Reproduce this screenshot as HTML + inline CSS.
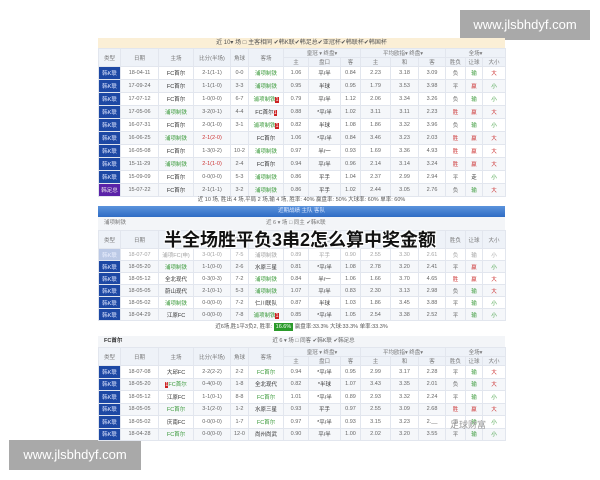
<!DOCTYPE html>
<html><head><meta charset="utf-8"><style>
*{margin:0;padding:0;box-sizing:border-box}
body{width:600px;height:480px;background:#fff;position:relative;overflow:hidden;font-family:"Liberation Sans","Noto Sans CJK SC",sans-serif;color:#666}
.abs{position:absolute}
table{border-collapse:collapse;table-layout:fixed;width:407px;font-size:5.5px;text-align:center}
td{border:1px solid #e2e6ee;white-space:nowrap;overflow:hidden;padding:0}
tr.a td{background:#fff}
tr.b td{background:#f5f7fa}
.h td{background:#eef2f8;color:#777}
td.t{background:#1d48a4 !important;color:#dfe6ff}
td.p{background:#5a22a8 !important;color:#eee}
.g{color:#3a9a3a}.r{color:#c33}.k{color:#333}
.wm{background:#a9a9a9;color:#fff;font-size:13px;text-align:center;line-height:30px}
</style></head><body>
<div class="abs wm" style="left:460px;top:10px;width:130px;height:30px">www.jlsbhdyf.com</div>
<div class="abs wm" style="left:9px;top:440px;width:132px;height:30px">www.jlsbhdyf.com</div>

<div class="abs" style="left:98px;top:38px;width:407px;height:10px;background:#fbefd6;font-size:6px;line-height:10px;text-align:center;color:#555">近 10▾ 场 □ 主客相同 ✔韩K联✔韩足总✔亚冠杯✔韩联杯✔韩国杯</div>
<table class="abs" style="left:98px;top:48px">
<colgroup><col style="width:22px"><col style="width:38px"><col style="width:35px"><col style="width:37px"><col style="width:18px"><col style="width:35px"><col style="width:25px"><col style="width:32px"><col style="width:20px"><col style="width:30px"><col style="width:28px"><col style="width:27px"><col style="width:20px"><col style="width:17px"><col style="width:23px"></colgroup>
<tr class="h" style="height:9px"><td rowspan="2">类型</td><td rowspan="2">日期</td><td rowspan="2">主场</td><td rowspan="2">比分(半场)</td><td rowspan="2">角球</td><td rowspan="2">客场</td><td colspan="3">皇冠 ▾ 终盘▾</td><td colspan="3">平均欧指▾ 终盘▾</td><td colspan="3">全场▾</td></tr>
<tr class="h" style="height:9px"><td>主</td><td>盘口</td><td>客</td><td>主</td><td>和</td><td>客</td><td>胜负</td><td>让球</td><td>大小</td></tr>
<tr class="a" style="height:13px"><td class="t">韩K联</td><td>18-04-11</td><td class="k">FC首尔</td><td>2-1(1-1)</td><td>0-0</td><td class="g">浦项制铁</td><td>1.06</td><td class="k">平/半</td><td>0.84</td><td>2.23</td><td>3.18</td><td>3.09</td><td>负</td><td class="g">输</td><td class="r">大</td></tr>
<tr class="b" style="height:13px"><td class="t">韩K联</td><td>17-09-24</td><td class="k">FC首尔</td><td>1-1(1-0)</td><td>3-3</td><td class="g">浦项制铁</td><td>0.95</td><td class="k">半球</td><td>0.95</td><td>1.79</td><td>3.53</td><td>3.98</td><td>平</td><td class="r">赢</td><td class="g">小</td></tr>
<tr class="a" style="height:13px"><td class="t">韩K联</td><td>17-07-12</td><td class="k">FC首尔</td><td>1-0(0-0)</td><td>6-7</td><td class="g">浦项制铁<span style="background:#c22;color:#fff">1</span></td><td>0.79</td><td class="k">平/半</td><td>1.12</td><td>2.06</td><td>3.34</td><td>3.26</td><td>负</td><td class="g">输</td><td class="g">小</td></tr>
<tr class="b" style="height:13px"><td class="t">韩K联</td><td>17-05-06</td><td class="g">浦项制铁</td><td>3-2(0-1)</td><td>4-4</td><td class="k">FC首尔<span style="background:#c22;color:#fff">1</span></td><td>0.88</td><td class="k">*平/半</td><td>1.02</td><td>3.11</td><td>3.11</td><td>2.23</td><td class="r">胜</td><td class="r">赢</td><td class="r">大</td></tr>
<tr class="a" style="height:13px"><td class="t">韩K联</td><td>16-07-31</td><td class="k">FC首尔</td><td>2-0(1-0)</td><td>3-1</td><td class="g">浦项制铁<span style="background:#c22;color:#fff">1</span></td><td>0.82</td><td class="k">半球</td><td>1.08</td><td>1.86</td><td>3.32</td><td>3.96</td><td>负</td><td class="g">输</td><td class="g">小</td></tr>
<tr class="b" style="height:13px"><td class="t">韩K联</td><td>16-06-25</td><td class="g">浦项制铁</td><td class="r">2-1(2-0)</td><td></td><td class="k">FC首尔</td><td>1.06</td><td class="k">*平/半</td><td>0.84</td><td>3.46</td><td>3.23</td><td>2.03</td><td class="r">胜</td><td class="r">赢</td><td class="r">大</td></tr>
<tr class="a" style="height:13px"><td class="t">韩K联</td><td>16-05-08</td><td class="k">FC首尔</td><td>1-3(0-2)</td><td>10-2</td><td class="g">浦项制铁</td><td>0.97</td><td class="k">半/一</td><td>0.93</td><td>1.69</td><td>3.36</td><td>4.93</td><td class="r">胜</td><td class="r">赢</td><td class="r">大</td></tr>
<tr class="b" style="height:13px"><td class="t">韩K联</td><td>15-11-29</td><td class="g">浦项制铁</td><td class="r">2-1(1-0)</td><td>2-4</td><td class="k">FC首尔</td><td>0.94</td><td class="k">平/半</td><td>0.96</td><td>2.14</td><td>3.14</td><td>3.24</td><td class="r">胜</td><td class="r">赢</td><td class="r">大</td></tr>
<tr class="a" style="height:13px"><td class="t">韩K联</td><td>15-09-09</td><td class="k">FC首尔</td><td>0-0(0-0)</td><td>5-3</td><td class="g">浦项制铁</td><td>0.86</td><td class="k">平手</td><td>1.04</td><td>2.37</td><td>2.99</td><td>2.94</td><td>平</td><td class="k">走</td><td class="g">小</td></tr>
<tr class="b" style="height:13px"><td class="p">韩足总</td><td>15-07-22</td><td class="k">FC首尔</td><td>2-1(1-1)</td><td>3-2</td><td class="g">浦项制铁</td><td>0.86</td><td class="k">平手</td><td>1.02</td><td>2.44</td><td>3.05</td><td>2.76</td><td>负</td><td class="g">输</td><td class="r">大</td></tr>
</table>
<div class="abs" style="left:98px;top:195px;width:407px;height:11px;font-size:5.5px;line-height:11px;text-align:center;color:#555">近 10 场, 胜出 4 场,平局 2 场,输 4 场, 胜率: 40% 赢盘率: 50% 大球率: 60% 单率: 60%</div>
<div class="abs" style="left:98px;top:206px;width:407px;height:11px;background:linear-gradient(#5b93dc,#2f6cc4);font-size:5.5px;line-height:11px;text-align:center;color:#dfeaff">近期战绩 主队 客队</div>
<div class="abs" style="left:98px;top:217px;width:407px;height:13px;background:#f3f5f8;font-size:5.5px;line-height:13px;color:#777;padding-left:6px">浦项制铁<span style="margin-left:140px">近 6 ▾ 场 □ 同主 ✔韩K联</span></div>
<table class="abs" style="left:98px;top:230px">
<colgroup><col style="width:22px"><col style="width:38px"><col style="width:35px"><col style="width:37px"><col style="width:18px"><col style="width:35px"><col style="width:25px"><col style="width:32px"><col style="width:20px"><col style="width:30px"><col style="width:28px"><col style="width:27px"><col style="width:20px"><col style="width:17px"><col style="width:23px"></colgroup>
<tr class="h" style="height:18px"><td>类型</td><td>日期</td><td>主场</td><td>比分</td><td>角球</td><td>客场</td><td>主</td><td>盘口</td><td>客</td><td>主</td><td>和</td><td>客</td><td>胜负</td><td>让球</td><td>大小</td></tr>
<tr class="a" style="height:12px;opacity:.6"><td class="t" style="background:#8fa6d6 !important">韩K联</td><td>18-07-07</td><td>浦项FC(申)</td><td>3-0(1-0)</td><td>7-5</td><td>浦项制铁</td><td>0.89</td><td>平手</td><td>0.90</td><td>2.55</td><td>3.30</td><td>2.61</td><td>负</td><td>输</td><td>小</td></tr>
<tr class="b" style="height:12px"><td class="t">韩K联</td><td>18-05-20</td><td class="g">浦项制铁</td><td>1-1(0-0)</td><td>2-6</td><td class="k">水原三星</td><td>0.81</td><td class="k">*平/半</td><td>1.08</td><td>2.78</td><td>3.20</td><td>2.41</td><td>平</td><td class="r">赢</td><td class="g">小</td></tr>
<tr class="a" style="height:12px"><td class="t">韩K联</td><td>18-05-12</td><td class="k">全北现代</td><td>0-3(0-3)</td><td>7-2</td><td class="g">浦项制铁</td><td>0.84</td><td class="k">半/一</td><td>1.06</td><td>1.66</td><td>3.70</td><td>4.65</td><td class="r">胜</td><td class="r">赢</td><td class="r">大</td></tr>
<tr class="b" style="height:12px"><td class="t">韩K联</td><td>18-05-05</td><td class="k">蔚山现代</td><td>2-1(0-1)</td><td>5-3</td><td class="g">浦项制铁</td><td>1.07</td><td class="k">平/半</td><td>0.83</td><td>2.30</td><td>3.13</td><td>2.98</td><td>负</td><td class="g">输</td><td class="r">大</td></tr>
<tr class="a" style="height:12px"><td class="t">韩K联</td><td>18-05-02</td><td class="g">浦项制铁</td><td>0-0(0-0)</td><td>7-2</td><td class="k">仁川联队</td><td>0.87</td><td class="k">半球</td><td>1.03</td><td>1.86</td><td>3.45</td><td>3.88</td><td>平</td><td class="g">输</td><td class="g">小</td></tr>
<tr class="b" style="height:12px"><td class="t">韩K联</td><td>18-04-29</td><td class="k">江原FC</td><td>0-0(0-0)</td><td>7-8</td><td class="g">浦项制铁<span style="background:#c22;color:#fff">1</span></td><td>0.85</td><td class="k">*平/半</td><td>1.05</td><td>2.54</td><td>3.38</td><td>2.52</td><td>平</td><td class="g">输</td><td class="g">小</td></tr>
</table>
<div class="abs" style="left:98px;top:320px;width:407px;height:14px;font-size:5.5px;line-height:14px;text-align:center;color:#555">近6场,胜1平3负2, 胜率: <span style="background:#2a9a2a;color:#fff;padding:1px 2px">16.6%</span> 赢盘率:33.3% 大球:33.3% 单率:33.3%</div>
<div class="abs" style="left:98px;top:336px;width:407px;height:11px;background:#f3f5f8;font-size:5.5px;line-height:11px;color:#333;padding-left:6px"><b>FC首尔</b><span style="margin-left:150px;color:#666">近 6 ▾ 场 □ 同客 ✔韩K联 ✔韩足总</span></div>
<table class="abs" style="left:98px;top:347px">
<colgroup><col style="width:22px"><col style="width:38px"><col style="width:35px"><col style="width:37px"><col style="width:18px"><col style="width:35px"><col style="width:25px"><col style="width:32px"><col style="width:20px"><col style="width:30px"><col style="width:28px"><col style="width:27px"><col style="width:20px"><col style="width:17px"><col style="width:23px"></colgroup>
<tr class="h" style="height:9px"><td rowspan="2">类型</td><td rowspan="2">日期</td><td rowspan="2">主场</td><td rowspan="2">比分(半场)</td><td rowspan="2">角球</td><td rowspan="2">客场</td><td colspan="3">皇冠 ▾ 终盘▾</td><td colspan="3">平均欧指▾ 终盘▾</td><td colspan="3">全场▾</td></tr>
<tr class="h" style="height:9px"><td>主</td><td>盘口</td><td>客</td><td>主</td><td>和</td><td>客</td><td>胜负</td><td>让球</td><td>大小</td></tr>
<tr class="a" style="height:12.5px"><td class="t">韩K联</td><td>18-07-08</td><td class="k">大邱FC</td><td>2-2(2-2)</td><td>2-2</td><td class="g">FC首尔</td><td>0.94</td><td class="k">*平/半</td><td>0.95</td><td>2.99</td><td>3.17</td><td>2.28</td><td>平</td><td class="g">输</td><td class="r">大</td></tr>
<tr class="b" style="height:12.5px"><td class="t">韩K联</td><td>18-05-20</td><td class="g"><span style="background:#c22;color:#fff">1</span>FC首尔</td><td>0-4(0-0)</td><td>1-8</td><td class="k">全北现代</td><td>0.82</td><td class="k">*半球</td><td>1.07</td><td>3.43</td><td>3.35</td><td>2.01</td><td>负</td><td class="g">输</td><td class="r">大</td></tr>
<tr class="a" style="height:12.5px"><td class="t">韩K联</td><td>18-05-12</td><td class="k">江原FC</td><td>1-1(0-1)</td><td>8-8</td><td class="g">FC首尔</td><td>1.01</td><td class="k">*平/半</td><td>0.89</td><td>2.93</td><td>3.32</td><td>2.24</td><td>平</td><td class="g">输</td><td class="g">小</td></tr>
<tr class="b" style="height:12.5px"><td class="t">韩K联</td><td>18-05-05</td><td class="g">FC首尔</td><td>3-1(2-0)</td><td>1-2</td><td class="k">水原三星</td><td>0.93</td><td class="k">平手</td><td>0.97</td><td>2.55</td><td>3.09</td><td>2.68</td><td class="r">胜</td><td class="r">赢</td><td class="r">大</td></tr>
<tr class="a" style="height:12.5px"><td class="t">韩K联</td><td>18-05-02</td><td class="k">庆南FC</td><td>0-0(0-0)</td><td>1-7</td><td class="g">FC首尔</td><td>0.97</td><td class="k">*平/半</td><td>0.93</td><td>3.15</td><td>3.23</td><td>2.__</td><td>平</td><td class="g">输</td><td class="g">小</td></tr>
<tr class="b" style="height:12.5px"><td class="t">韩K联</td><td>18-04-28</td><td class="g">FC首尔</td><td>0-0(0-0)</td><td>12-0</td><td class="k">尚州尚武</td><td>0.90</td><td class="k">平/半</td><td>1.00</td><td>2.02</td><td>3.20</td><td>3.55</td><td>平</td><td class="g">输</td><td class="g">小</td></tr>
</table>
<div class="abs" style="left:450px;top:418px;font-size:9px;color:#999">足球财富</div>
<div class="abs" style="left:0;top:227px;width:600px;text-align:center;font-size:18px;font-weight:bold;color:#111;line-height:26px;text-shadow:0 0 2px #fff,0 0 2px #fff,1px 1px 0 #fff,-1px -1px 0 #fff,1px -1px 0 #fff,-1px 1px 0 #fff">半全场胜平负3串2怎么算中奖金额</div>
</body></html>
